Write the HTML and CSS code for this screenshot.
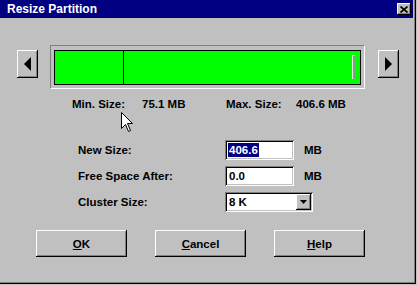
FILE: index.html
```html
<!DOCTYPE html>
<html lang="en">

<head>
  <meta charset="UTF-8">
  <title>Resize Partition</title>
  <link rel="stylesheet" href="styles.css">
</head>

<body>
<div class="window">
  <div class="titlebar">
    <span class="title">Resize Partition</span>
    <span class="close-btn">
      <svg width="8" height="7" viewBox="0 0 8 7">
        <path d="M0.5 0.5 L7.5 6.5 M7.5 0.5 L0.5 6.5" stroke="#000" stroke-width="1.6" fill="none"/>
      </svg>
    </span>
  </div>

  <div class="slider-row">
    <span class="arrow-btn">
      <svg width="7" height="14" viewBox="0 0 7 14"><polygon points="7,0 0,7 7,14" fill="#000"/></svg>
    </span>
    <div class="track">
      <div class="bar">
        <div class="bar-min"></div>
        <div class="bar-rest">
          <span class="thumb"></span>
        </div>
      </div>
    </div>
    <span class="arrow-btn">
      <svg width="7" height="14" viewBox="0 0 7 14"><polygon points="0,0 7,7 0,14" fill="#000"/></svg>
    </span>
  </div>

  <div class="limits">
    <span class="lim-label">Min. Size:</span>
    <span class="lim-value">75.1 MB</span>
    <span class="lim-label max">Max. Size:</span>
    <span class="lim-value">406.6 MB</span>
  </div>

  <div class="form">
    <div class="row">
      <span class="label">New Size:</span>
      <span class="field"><span class="sel">406.6</span></span>
      <span class="unit">MB</span>
    </div>
    <div class="row">
      <span class="label">Free Space After:</span>
      <span class="field">0.0</span>
      <span class="unit">MB</span>
    </div>
    <div class="row">
      <span class="label">Cluster Size:</span>
      <span class="field combo">
        <span class="combo-text">8 K</span>
        <span class="drop-btn">
          <svg width="7" height="4" viewBox="0 0 7 4"><polygon points="0,0 7,0 3.5,4" fill="#000"/></svg>
        </span>
      </span>
    </div>
  </div>

  <div class="buttons">
    <span class="btn"><u>O</u>K</span>
    <span class="btn"><u>C</u>ancel</span>
    <span class="btn"><u>H</u>elp</span>
  </div>

  <!-- mouse pointer -->
  <svg class="cursor" width="12" height="20" viewBox="0 0 12 20">
    <path d="M0.5 0.5 L0.5 16.5 L4.5 12.5 L7.5 19.5 L9.5 18.5 L6.5 11.5 L11.5 11.5 Z" fill="#fff" stroke="#000" stroke-width="1"/>
  </svg>
</div>
</body>

</html>
```

FILE: styles.css
```css
* {
  padding: 0;
  margin: 0;
  box-sizing: border-box;
}

body {
  background: #c0c0c0;
  font-family: "Liberation Sans", Arial, sans-serif;
  font-weight: bold;
  font-size: 11.5px;
  color: #000;
}

.window {
  position: relative;
  width: 416px;
  height: 284px;
  background: #c0c0c0;
  border-right: 1px solid #000;
  border-bottom: 1px solid #000;
  padding-right: 2px;
  box-shadow: inset -1px -1px #808080;
}

.titlebar {
  height: 18px;
  background: #000080;
  display: flex;
  align-items: center;
  justify-content: space-between;
  padding: 0 2px 0 7px;
}

.title {
  color: #fff;
  font-size: 12px;
  line-height: 18px;
}

.close-btn {
  width: 14px;
  height: 12px;
  background: #c0c0c0;
  display: flex;
  align-items: center;
  justify-content: center;
  box-shadow: inset -1px -1px #000, inset 1px 1px #fff, inset -2px -2px #808080;
}

/* slider */
.slider-row {
  display: flex;
  align-items: flex-start;
  margin-top: 27px;
  padding-left: 17px;
}

.arrow-btn {
  width: 21px;
  height: 28px;
  margin-top: 5px;
  display: flex;
  align-items: center;
  justify-content: center;
  background: #c0c0c0;
  box-shadow: inset -1px -1px #000, inset 1px 1px #fff, inset -2px -2px #808080;
}

.track {
  width: 315px;
  height: 44px;
  margin: 0 13px 0 12px;
  border-top: 1px solid #808080;
  border-left: 1px solid #808080;
  border-right: 1px solid #fff;
  border-bottom: 1px solid #fff;
  padding: 4px 3px 3px 3px;
}

.bar {
  display: flex;
  height: 35px;
  border: 1px solid #000;
  background: #00ff00;
}

.bar-min {
  width: 69px;
  border-right: 1px solid #000;
}

.bar-rest {
  flex: 1;
  position: relative;
}

.thumb {
  position: absolute;
  right: 5px;
  top: 4px;
  width: 3px;
  height: 24px;
  border-left: 1px solid #e0ffe0;
  border-top: 1px solid #e0ffe0;
  border-right: 1px solid #80a080;
}

/* limits */
.limits {
  display: flex;
  margin-top: 9px;
  padding-left: 72px;
  line-height: 13px;
}

.lim-label {
  width: 70px;
}

.lim-label.max {
  width: 70px;
}

.lim-value {
  width: 84px;
}

/* form */
.form {
  margin-top: 29px;
  padding-left: 78px;
  display: flex;
  flex-direction: column;
  gap: 6px;
}

.row {
  display: flex;
  align-items: center;
  height: 20px;
}

.label {
  width: 147px;
}

.field {
  width: 69px;
  height: 20px;
  background: #fff;
  padding: 2px 2px 0 4px;
  line-height: 16px;
  box-shadow: inset 1px 1px #808080, inset -1px -1px #fff, inset 2px 2px #000, inset -2px -2px #c0c0c0;
}

.sel {
  display: inline-block;
  background: #000080;
  color: #fff;
  padding: 0 1px;
  margin-left: -1px;
  line-height: 14px;
  margin-top: 1px;
}

.unit {
  margin-left: 10px;
}

.field.combo {
  width: 88px;
  display: flex;
  justify-content: space-between;
  padding: 2px 2px 2px 4px;
}

.drop-btn {
  width: 15px;
  height: 16px;
  display: flex;
  align-items: center;
  justify-content: center;
  background: #c0c0c0;
  box-shadow: inset -1px -1px #000, inset 1px 1px #fff, inset -2px -2px #808080;
}

/* buttons */
.buttons {
  display: flex;
  gap: 28px;
  margin-top: 18px;
  padding-left: 36px;
}

.btn {
  width: 91px;
  height: 27px;
  display: flex;
  align-items: center;
  justify-content: center;
  background: #c0c0c0;
  box-shadow: inset -1px -1px #000, inset 1px 1px #fff, inset -2px -2px #808080;
}

.cursor {
  position: absolute;
  left: 121px;
  top: 112px;
}
```
